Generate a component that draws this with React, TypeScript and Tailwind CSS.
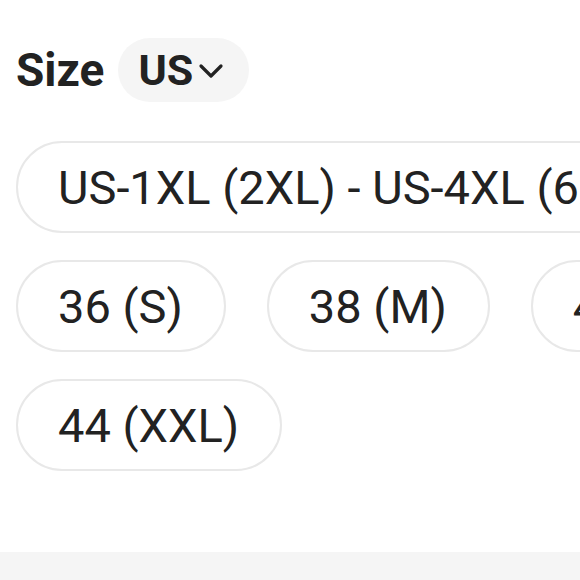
import React from "react";

const rows: string[][] = [
  ["US-1XL (2XL) - US-4XL (6XL)"],
  ["36 (S)", "38 (M)", "40 (L)", "42 (XL)"],
  ["44 (XXL)"],
];

export default function App() {
  return (
    <div
      className="w-[580px] h-[580px] overflow-hidden bg-white flex flex-col text-[#222222]"
      style={{ fontFamily: "Roboto, 'Noto Sans', sans-serif" }}
    >
      <div className="flex flex-col pl-4 pt-[38px]">
        <div className="flex items-center gap-[14px] h-16">
          <span className="text-[46px] font-bold leading-none">Size</span>
          <div className="h-16 rounded-full bg-[#f5f5f5] flex items-center pl-5 pr-[25px] gap-[5px]">
            <span className="text-[43px] font-bold leading-none">US</span>
            <svg width="26" height="16" viewBox="0 0 26 16" className="mt-[2px]">
              <path d="M3 3 L13 13 L23 3" fill="none" stroke="#222222" strokeWidth="3.2" strokeLinecap="round" strokeLinejoin="round" />
            </svg>
          </div>
        </div>
        <div className="flex flex-col gap-[27px] mt-[39px]">
          {rows.map((row, i) => (
            <div key={i} className="flex gap-[41px] whitespace-nowrap">
              {row.map((s) => (
                <div
                  key={s}
                  className="h-[92px] shrink-0 rounded-full border-2 border-[#e8e8e8] pl-[40px] pr-[41px] flex items-center text-[47px] leading-none"
                >
                  {s}
                </div>
              ))}
            </div>
          ))}
        </div>
      </div>
      <div className="mt-auto h-[28px] bg-[#f5f5f5] shrink-0" />
    </div>
  );
}
